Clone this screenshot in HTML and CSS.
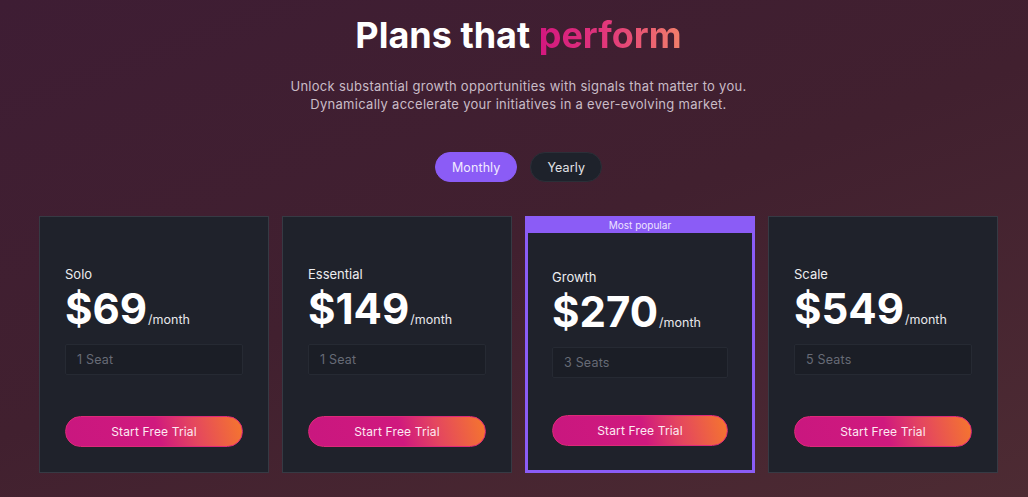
FILE: index.html
```html
<!DOCTYPE html>
<html lang="en">
<head>
<meta charset="utf-8">
<title>Plans that perform</title>
<link rel="stylesheet" href="styles.css">
</head>
<body>
<main class="page">
  <header class="hero">
    <h1 class="title">Plans that <span class="accent">perform</span></h1>
    <p class="subtitle">Unlock substantial growth opportunities with signals that matter to you.<br>Dynamically accelerate your initiatives in a ever-evolving market.</p>
    <div class="toggle">
      <button class="pill pill-active">Monthly</button>
      <button class="pill">Yearly</button>
    </div>
  </header>
  <section class="plans">
    <article class="card">
      <div class="plan-name">Solo</div>
      <div class="price"><span class="amount">$69</span><span class="per">/month</span></div>
      <div class="seats">1 Seat</div>
      <button class="cta">Start Free Trial</button>
    </article>
    <article class="card">
      <div class="plan-name">Essential</div>
      <div class="price"><span class="amount">$149</span><span class="per">/month</span></div>
      <div class="seats">1 Seat</div>
      <button class="cta">Start Free Trial</button>
    </article>
    <article class="card card-popular">
      <div class="badge">Most popular</div>
      <div class="card-body">
        <div class="plan-name">Growth</div>
        <div class="price"><span class="amount">$270</span><span class="per">/month</span></div>
        <div class="seats">3 Seats</div>
        <button class="cta">Start Free Trial</button>
      </div>
    </article>
    <article class="card">
      <div class="plan-name">Scale</div>
      <div class="price"><span class="amount">$549</span><span class="per">/month</span></div>
      <div class="seats">5 Seats</div>
      <button class="cta">Start Free Trial</button>
    </article>
  </section>
</main>
</body>
</html>
```

FILE: styles.css
```css
* { box-sizing: border-box; }
html, body { margin: 0; height: 100%; }
body {
  font-family: Inter, "Noto Sans", sans-serif;
  background: linear-gradient(160deg, #3e1d34 0%, #41202f 50%, #4d2b33 100%);
  color: #fff;
  padding-left: 9px;
  overflow: hidden;
}
.page {
  width: 959px;
  margin: 0 auto;
}
.hero {
  display: flex;
  flex-direction: column;
  align-items: center;
  padding-top: 14px;
}
.title {
  margin: 0;
  font-size: 36px;
  line-height: 42px;
  font-weight: 700;
  color: #fff;
}
.accent {
  background: linear-gradient(90deg, #d4177f 0%, #e23a7a 50%, #f2806a 100%);
  -webkit-background-clip: text;
  background-clip: text;
  color: transparent;
}
.subtitle {
  margin: 21px 0 0;
  font-size: 13px;
  letter-spacing: 0.28px;
  line-height: 18px;
  color: #c9bcc7;
  text-align: center;
}
.toggle {
  display: flex;
  gap: 13px;
  margin-top: 39px;
}
.pill {
  font-family: inherit;
  height: 30px;
  padding: 0 16px;
  border-radius: 15px;
  font-size: 12.5px;
  letter-spacing: 0.1px;
  border: 1px solid #2b2f38;
  background: #1e222b;
  color: #e2e2e6;
}
.pill-active {
  background: #8b5cf6;
  border-color: #8b5cf6;
  color: #f1eaff;
}
.plans {
  display: grid;
  grid-template-columns: repeat(4, 230px);
  gap: 13px;
  margin-top: 34px;
}
.card {
  display: flex;
  flex-direction: column;
  height: 257px;
  background: #1f222b;
  border: 1px solid #363a44;
  padding: 49px 25px 25px;
}
.card-popular {
  border: 3px solid #8b5cf6;
  padding: 0;
}
.badge {
  background: #8b5cf6;
  height: 14px;
  line-height: 12px;
  font-size: 10px;
  text-align: center;
  color: #eee4ff;
}
.card-body {
  flex: 1;
  display: flex;
  flex-direction: column;
  padding: 36px 24px 24px;
}
.plan-name {
  font-size: 13px;
  line-height: 16px;
  color: #ececef;
}
.price {
  margin-top: 5px;
  display: flex;
  align-items: baseline;
  gap: 1px;
}
.amount {
  font-size: 42px;
  line-height: 44px;
  font-weight: 700;
  color: #fff;
}
.per {
  font-size: 12.5px;
  color: #e8e8ec;
}
.seats {
  margin-top: 13px;
  height: 31px;
  line-height: 29px;
  padding: 0 11px;
  font-size: 12.5px;
  letter-spacing: 0.2px;
  background: #1b1e26;
  border: 1px solid #262a33;
  border-radius: 2px;
  color: #676b76;
}
.cta {
  margin-top: auto;
  height: 31px;
  border-radius: 16px;
  font-family: inherit;
  font-size: 12px;
  letter-spacing: 0.15px;
  color: #fdeaf2;
  border: 1px solid #dc2a78;
  background: linear-gradient(75deg, #c9177f 0%, #d0197e 52%, #e4465f 72%, #f5772d 100%);
}
```
